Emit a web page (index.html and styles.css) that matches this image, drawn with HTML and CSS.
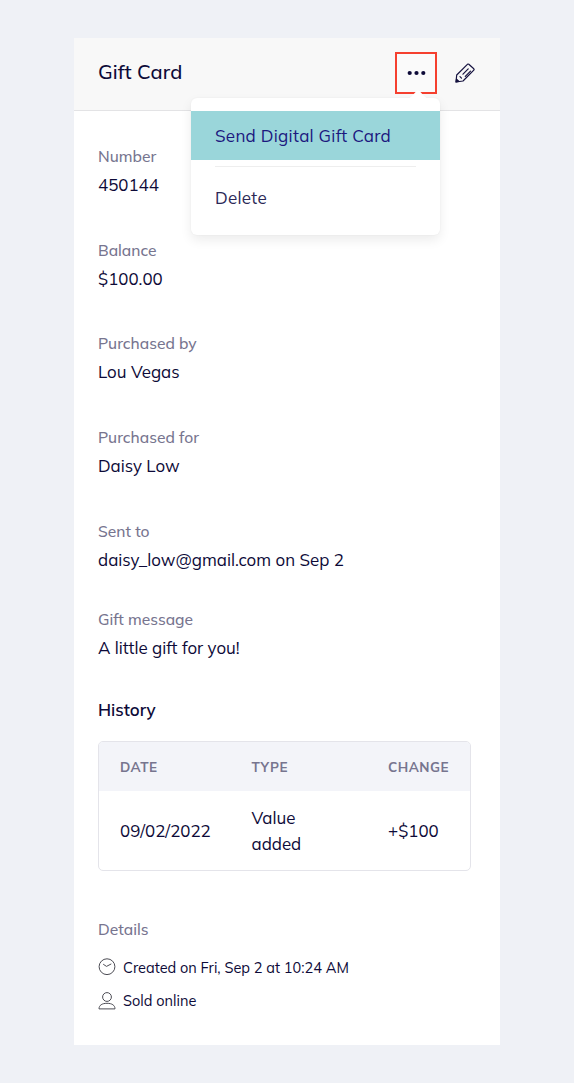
FILE: index.html
```html
<!DOCTYPE html>
<html lang="en">
<head>
<meta charset="utf-8">
<title>Gift Card</title>
<link rel="stylesheet" href="styles.css">
</head>
<body>
<main class="card">
  <header class="card-header">
    <h1 class="title">Gift Card</h1>
    <div class="actions">
      <button class="more" aria-label="More actions">
        <svg width="20" height="6" viewBox="0 0 20 6"><circle cx="3.7" cy="3" r="2.1"/><circle cx="10.5" cy="3" r="2.1"/><circle cx="17.3" cy="3" r="2.1"/></svg>
      </button>
      <button class="edit" aria-label="Edit">
        <svg width="20" height="20" viewBox="0 0 20 20" fill="none" stroke="#15123f" stroke-width="1.2" stroke-linejoin="round" stroke-linecap="round"><path d="M1 19 1.7 12 12.4 1.3Q13.1.7 13.8 1.3L18.8 5.8Q19.4 6.5 18.8 7.1L8 18ZM8 11.2l5.2-5.3M10.3 13.4l5.2-5.3M5 13.6l1.5 1.5"/><path d="M1.100 18.900l.4-2.800 2.400 2.400z" fill="#15123f"/></svg>
      </button>
    </div>
    <nav class="menu">
      <svg class="menu-arrow" width="24" height="11" viewBox="0 0 24 11"><path d="M0 10.5Q3.5 10 6 7L10.5 2Q12 .5 13.5 2L18 7Q20.5 10 24 10.5Z"/></svg>
      <a class="menu-item active">Send Digital Gift Card</a>
      <hr class="menu-rule">
      <a class="menu-item">Delete</a>
    </nav>
  </header>
  <div class="content">
    <dl class="fields">
      <div class="field"><dt>Number</dt><dd>450144</dd></div>
      <div class="field"><dt>Balance</dt><dd>$100.00</dd></div>
      <div class="field"><dt>Purchased by</dt><dd>Lou Vegas</dd></div>
      <div class="field"><dt>Purchased for</dt><dd>Daisy Low</dd></div>
      <div class="field sent"><dt>Sent to</dt><dd>daisy_low@gmail.com on Sep 2</dd></div>
      <div class="field message"><dt>Gift message</dt><dd>A little gift for you!</dd></div>
    </dl>
    <h2 class="history-title">History</h2>
    <div class="history">
      <div class="row head"><span>DATE</span><span>TYPE</span><span>CHANGE</span></div>
      <div class="row body"><span>09/02/2022</span><span>Value<br>added</span><span>+$100</span></div>
    </div>
    <h3 class="details-title">Details</h3>
    <ul class="details">
      <li><svg width="18" height="18" viewBox="0 0 18 18"><circle cx="9" cy="8.7" r="7.9"/><path d="M5.2 6.200 8.5 8.400 13.3 5.900"/></svg><span>Created on Fri, Sep 2 at 10:24 AM</span></li>
      <li><svg width="18" height="18" viewBox="0 0 18 18"><circle cx="9" cy="5" r="4.400"/><path d="M1 16.900C1 13.300 4 11.300 9 11.300S17 13.300 17 16.900Z"/></svg><span>Sold online</span></li>
    </ul>
  </div>
</main>
</body>
</html>
```
FILE: styles.css
```css
* { box-sizing: border-box; }
body {
  margin: 0;
  padding: 38px 74px;
  background: #eff1f6;
  color: #0d0a38;
  font-family: Mulish, Muli, Lato, sans-serif;
  font-size: 16.9px;
}
h1, h2, h3, dl, dd, ul { margin: 0; padding: 0; }
.card { width: 426px; height: 1007px; background: #fff; }
.card-header {
  position: relative;
  display: flex;
  align-items: center;
  justify-content: space-between;
  height: 73px;
  padding: 0 25px 0 24px;
  background: #f8f8f8;
  border-bottom: 1px solid #e3e3e5;
}
.title { font-size: 20px; font-weight: 500; line-height: 24px; letter-spacing: .15px; padding-bottom: 4px; }
.actions { display: flex; align-items: center; gap: 17px; padding-bottom: 2px; }
button { display: flex; align-items: center; justify-content: center; padding: 0; border: 0; background: none; }
.more { width: 42px; height: 42px; border: 2px solid #f5402f; background: #fafafa; }
.more svg { fill: #0d0a38; }
.edit { width: 21px; }
.menu {
  position: absolute;
  z-index: 2;
  left: 117px;
  top: 60px;
  width: 249px;
  height: 137px;
  padding-top: 13px;
  background: #fff;
  border-radius: 6px;
  box-shadow: 0 5px 12px rgba(0, 0, 0, .08), 0 0 2px rgba(0, 0, 0, .05);
}
.menu-arrow { position: absolute; right: 10px; top: -9px; fill: #fff; }
.menu-item { display: block; height: 49px; padding-left: 24px; font-size: 17px; line-height: 49px; letter-spacing: .27px; color: #2b2856; }
.menu-item.active { background: #9ad6da; color: #1c187f; }
.menu-item:last-child { line-height: 48px; }
.menu-rule { height: 1px; margin: 6px 24px 7px; border: 0; background: #eee; }
.content { padding: 33.2px 29px 0 24px; }
.field { height: 93.6px; }
.field dt, .details-title { font-size: 15.6px; font-weight: 500; line-height: 24px; color: #77758f; }
.field dd { padding-top: 4px; line-height: 25px; }
.field.sent { height: 88.4px; }
.field.message { height: 91.4px; }
.history-title { font-size: 17px; font-weight: 600; line-height: 24px; }
.history { height: 130px; margin-top: 19px; overflow: hidden; border: 1px solid #e4e4ea; border-radius: 5px; }
.row { display: grid; grid-template-columns: 131.5px 136.5px 1fr; align-items: center; padding-left: 21px; }
.head { height: 49px; padding-bottom: 1px; background: #f3f4f9; color: #77758f; font-size: 13.5px; font-weight: 700; letter-spacing: .5px; }
.body { height: 79px; line-height: 25.5px; }
.details-title { margin-top: 46px; }
.details { list-style: none; padding-top: 13px; }
.details li { display: flex; align-items: center; gap: 7px; height: 33.5px; padding-bottom: 8px; font-size: 14.5px; white-space: nowrap; }
.details svg { flex: none; fill: none; stroke: #4d4d55; stroke-width: 1; }
```
